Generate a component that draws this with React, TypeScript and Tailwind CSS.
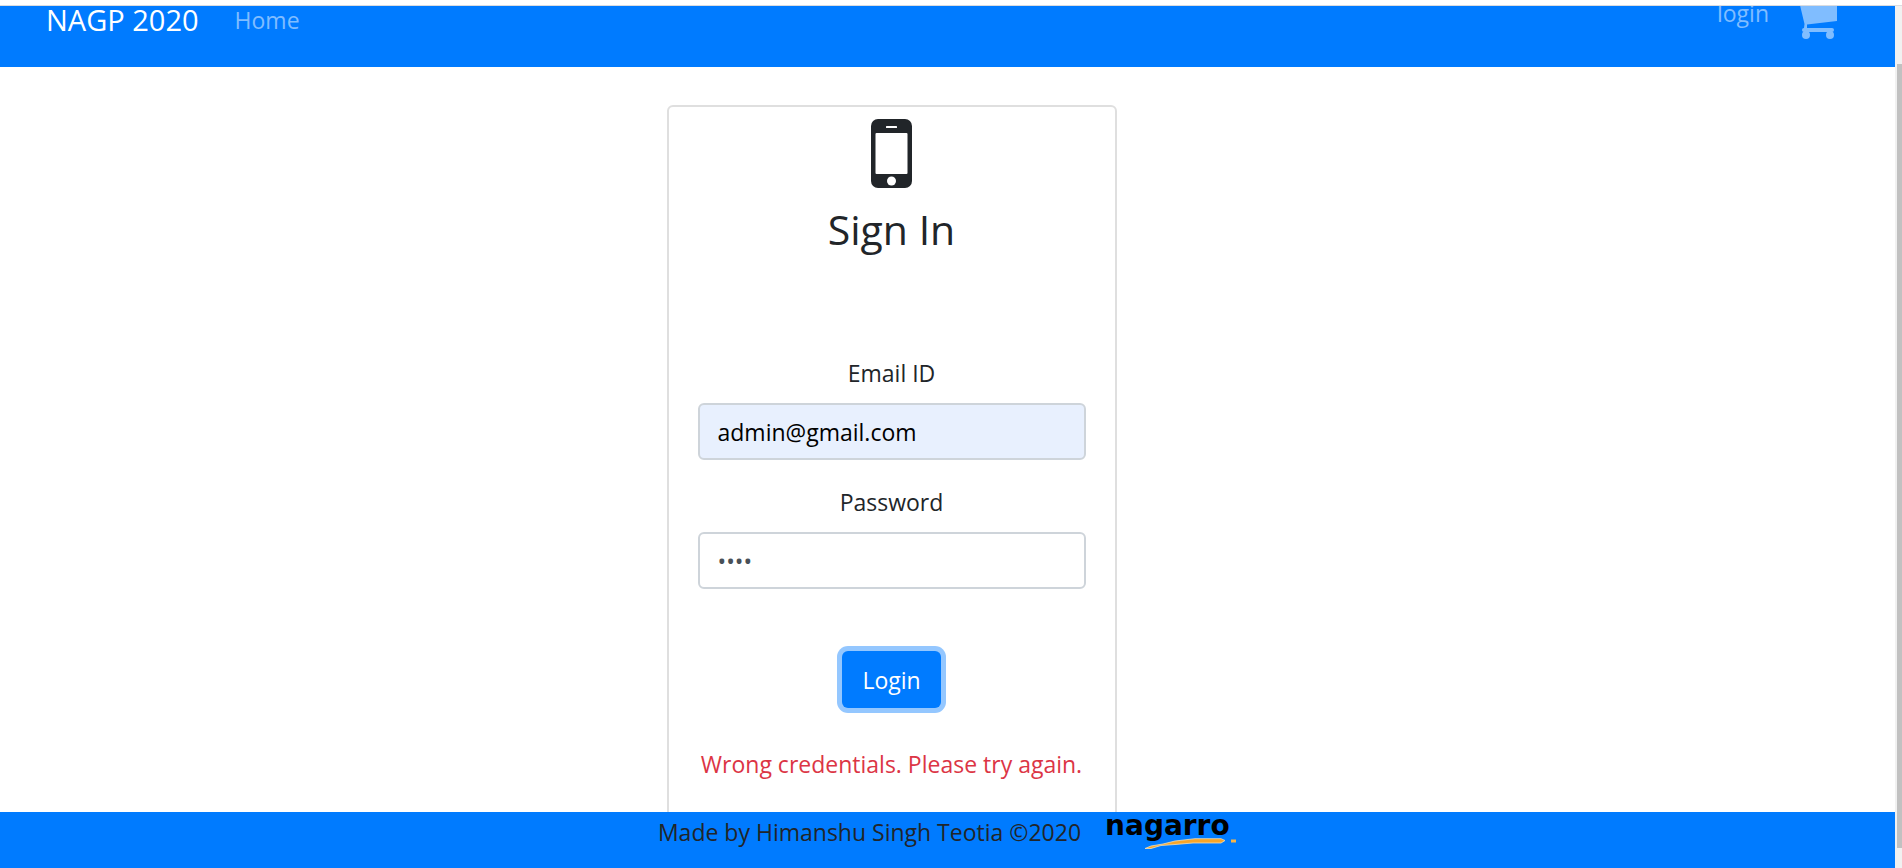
function PhoneIcon() {
  return (
    <svg width="42" height="70" viewBox="0 0 42 70" className="block" aria-hidden="true">
      <rect x="0" y="0" width="41" height="69" rx="7" fill="#212529" />
      <rect x="4.500" y="14" width="32" height="41" rx="1" fill="#fff" />
      <rect x="15" y="7" width="11" height="2" rx="0.5" fill="#fff" />
      <circle cx="20.500" cy="62" r="4.500" fill="#fff" />
    </svg>
  );
}

function CartIcon() {
  return (
    <svg width="44" height="48" viewBox="0 0 44 48" className="block" fill="#80bdff" aria-hidden="true">
      <path d="M0 8 Q0 6 2 6 H6 Q8 6 8.500 8 L9 10 H42 Q44 10 44 12 V30 L14 33.500 V37 H39 Q41 37 41 39 Q41 41 39 41 H11 Q9 41 9 39 Q9 37 11 37 L11.500 33 L6 10 H2 Q0 10 0 8 Z" />
      <circle cx="13" cy="44" r="4" />
      <circle cx="37" cy="44" r="4" />
    </svg>
  );
}

function NagarroLogo() {
  return (
    <a href="#nagarro" className="block pt-[2px]">
      <span className="block font-['DejaVu_Sans',sans-serif] text-[28px] font-bold leading-6 text-black">nagarro</span>
      <svg width="132" height="12" viewBox="0 0 132 12" className="block" aria-hidden="true">
        <path d="M40 10.500 L46 8 L58 6 L70 3 L90 0.700 L116 0.700 L120 2.500 L116 5 L88 5 L70 6.500 L56 7.500 L46 10.500 Z" fill="#f7a528" stroke="#f3dfb8" strokeWidth="0.8" />
        <rect x="126" y="1.500" width="5" height="3" fill="#f7b548" />
      </svg>
    </a>
  );
}

export default function App() {
  return (
    <div className="flex h-screen flex-col bg-white font-['Open_Sans','Noto_Sans',sans-serif] text-[23px] leading-9 text-[#212529]">
      <div className="h-[6px] shrink-0 border-b border-[#dadce0] bg-white" />
      <div className="flex min-h-0 flex-1">
        <div className="flex min-w-0 flex-1 flex-col">
          <header className="flex h-[61px] shrink-0 items-start overflow-hidden bg-[#007bff] pl-[46px] pr-[58px]">
            <nav className="-mt-1 flex flex-1 items-center gap-9">
              <a href="#top" className="text-[29px] text-white">NAGP 2020</a>
              <a href="#home" className="text-[#80bdff]">Home</a>
            </nav>
            <nav className="-mt-[15px] flex items-start gap-6">
              <a href="#login" className="pt-1 text-[#80bdff]">login</a>
              <a href="#cart" aria-label="Cart">
                <CartIcon />
              </a>
            </nav>
          </header>
          <main className="flex min-h-0 flex-1 justify-center overflow-hidden pr-[112px] pt-[38px]">
            <section className="flex h-[760px] w-[450px] flex-col items-center rounded-md border-2 border-[#dfdfdf] px-[29px] pt-3">
              <PhoneIcon />
              <h1 className="mt-3 text-[41px] leading-[56px]">Sign In</h1>
              <form className="mt-[98px] flex w-full flex-col items-center" onSubmit={(e) => e.preventDefault()}>
                <label htmlFor="email" className="mb-3">Email ID</label>
                <input
                  id="email"
                  type="email"
                  defaultValue="admin@gmail.com"
                  className="h-[57px] w-full rounded-md border-2 border-[#ced4da] bg-[#e8f0fe] px-[18px] text-black outline-none"
                />
                <label htmlFor="password" className="mb-3 mt-6">Password</label>
                <input
                  id="password"
                  type="password"
                  defaultValue="1234"
                  className="h-[57px] w-full rounded-md border-2 border-[#ced4da] bg-white px-[18px] text-[#495057] outline-none"
                />
                <button
                  type="submit"
                  className="mt-[62px] h-[57px] rounded-md bg-[#007bff] px-5 text-white ring-[5px] ring-[#94c7ff]"
                >
                  Login
                </button>
                <p role="alert" className="mt-[38px] whitespace-nowrap text-[#dc3545]">
                  Wrong credentials. Please try again.
                </p>
              </form>
            </section>
          </main>
          <footer className="flex h-14 shrink-0 items-start justify-center gap-6 bg-[#007bff]">
            <p className="pt-[2px]">Made by Himanshu Singh Teotia ©2020</p>
            <NagarroLogo />
          </footer>
        </div>
        <div className="flex w-[7px] shrink-0 flex-col bg-[#f1f1f1] pb-[20px] pl-[2px] pt-[58px]">
          <div className="flex-1 bg-[#c1c1c1]" />
        </div>
      </div>
    </div>
  );
}
